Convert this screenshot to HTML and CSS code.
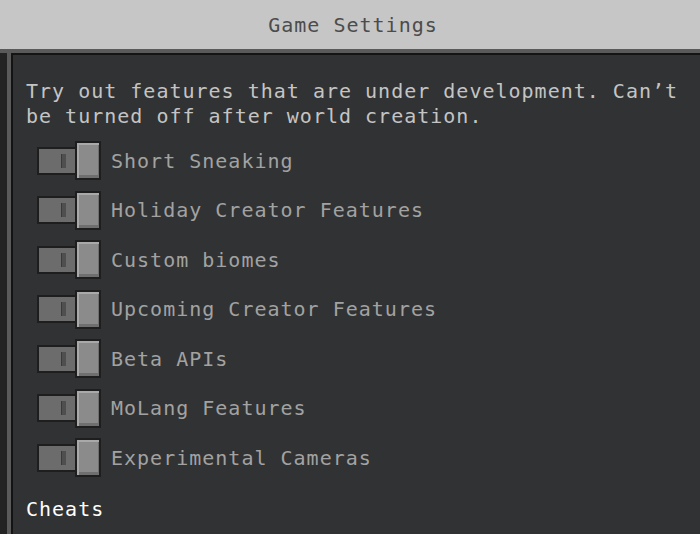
FILE: index.html
```html
<!DOCTYPE html>
<html>
<head>
<meta charset="utf-8">
<link rel="stylesheet" href="styles.css">
</head>
<body>
<header class="title-bar"><span class="title">Game Settings</span></header>
<div class="frame">
  <div class="edge-dark"></div>
  <div class="edge-grey">
    <main class="panel">
      <p class="desc">Try out features that are under development. Can’t be turned off after world creation.</p>
      <ul class="toggles">
        <li class="row"><span class="toggle"><span class="track"><span class="notch"></span></span><span class="knob"></span></span><span class="label">Short Sneaking</span></li>
        <li class="row"><span class="toggle"><span class="track"><span class="notch"></span></span><span class="knob"></span></span><span class="label">Holiday Creator Features</span></li>
        <li class="row"><span class="toggle"><span class="track"><span class="notch"></span></span><span class="knob"></span></span><span class="label">Custom biomes</span></li>
        <li class="row"><span class="toggle"><span class="track"><span class="notch"></span></span><span class="knob"></span></span><span class="label">Upcoming Creator Features</span></li>
        <li class="row"><span class="toggle"><span class="track"><span class="notch"></span></span><span class="knob"></span></span><span class="label">Beta APIs</span></li>
        <li class="row"><span class="toggle"><span class="track"><span class="notch"></span></span><span class="knob"></span></span><span class="label">MoLang Features</span></li>
        <li class="row"><span class="toggle"><span class="track"><span class="notch"></span></span><span class="knob"></span></span><span class="label">Experimental Cameras</span></li>
      </ul>
      <h2 class="section">Cheats</h2>
    </main>
  </div>
</div>
</body>
</html>
```
FILE: styles.css
```css
html, body {
  margin: 0;
  padding: 0;
  width: 700px;
  height: 534px;
  overflow: hidden;
  background: #313233;
  font-family: "DejaVu Sans Mono", "Liberation Mono", monospace;
  font-size: 20px;
  letter-spacing: 1px;
}
.title-bar {
  height: 49px;
  background: #c6c6c6;
  display: flex;
  align-items: center;
  justify-content: center;
}
.title {
  color: #4c4c4c;
  padding-left: 6px;
}
.frame {
  display: flex;
  border-top: 4px solid #5a5a5b;
  height: 481px;
}
.edge-dark {
  width: 7px;
  background: #232324;
  flex: none;
}
.edge-grey {
  flex: 1;
  border-left: 4px solid #5a5a5b;
  display: flex;
}
.panel {
  flex: 1;
  background: #313233;
  border-left: 2px solid #141415;
  border-top: 2px solid #141415;
  padding: 24px 8px 0 13px;
}
.desc {
  margin: 0;
  color: #c4c4c4;
  line-height: 25px;
}
.toggles {
  list-style: none;
  margin: 7px 0 0 0;
  padding: 0 0 0 11px;
}
.row {
  height: 49.5px;
  display: flex;
  align-items: center;
}
.toggle {
  display: flex;
  align-items: center;
  width: 74px;
  flex: none;
}
.track {
  width: 40px;
  height: 28px;
  box-sizing: border-box;
  border: 2px solid #1e1e1f;
  background: #6c6c6c;
  display: flex;
  align-items: center;
}
.notch {
  margin-left: 22px;
  width: 5px;
  height: 14px;
  background: #4f4f4f;
  box-shadow: inset 1px 0 0 #3a3a3a;
}
.knob {
  width: 26px;
  height: 39px;
  margin-left: -2px;
  box-sizing: border-box;
  border: 2px solid #1e1e1f;
  background: #8b8b8b;
  box-shadow: inset 2px 2px 0 #a9a9a9, inset -1px -3px 0 #6f6f6f;
}
.label {
  color: #a2a2a2;
}
.section {
  margin: 14px 0 0 0;
  font-size: 20px;
  font-weight: normal;
  color: #ffffff;
  line-height: 25px;
}
```
